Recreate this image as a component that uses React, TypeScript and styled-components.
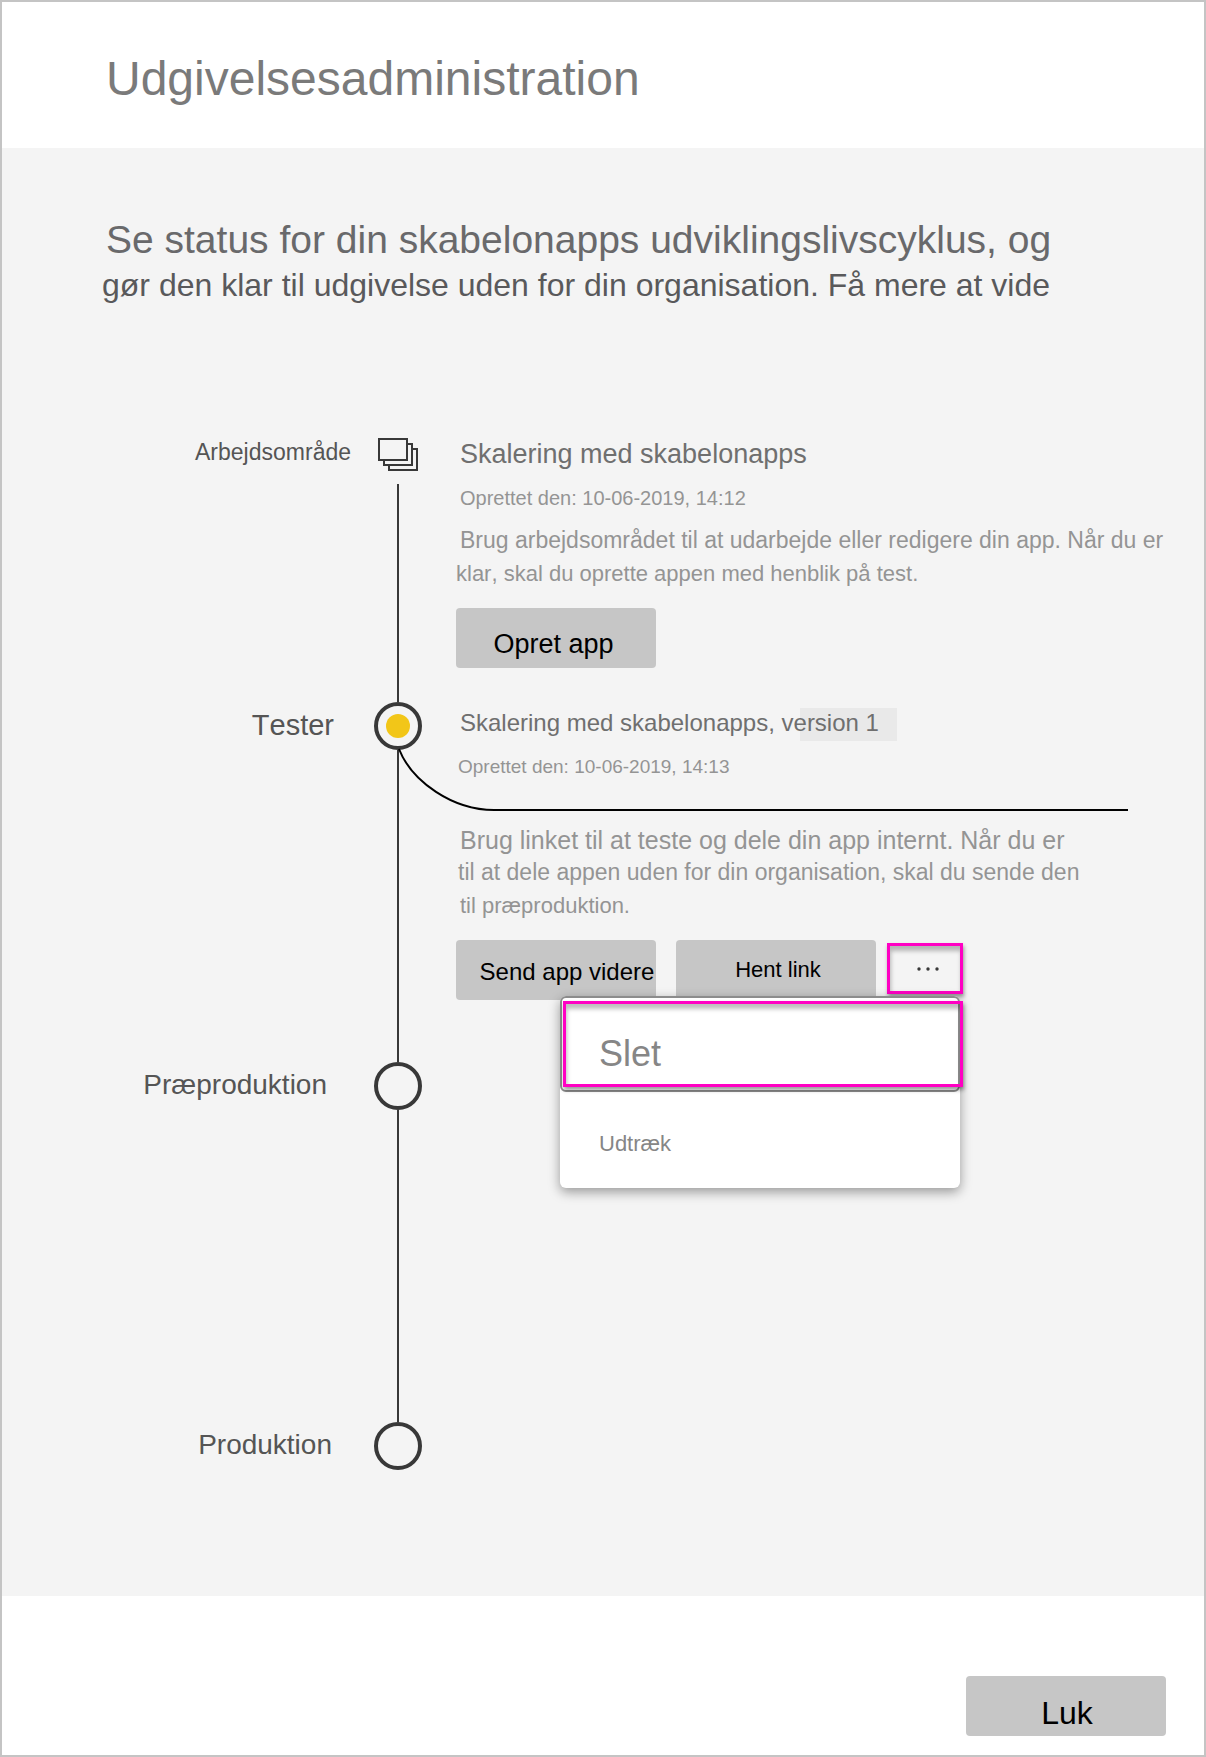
import React from 'react';
import styled, { createGlobalStyle, css } from 'styled-components';

const colors = {
  frame: '#c4c4c4',
  panel: '#f4f4f4',
  button: '#c6c6c6',
  ink: '#383838',
  accent: '#f2c618',
  callout: '#ff00c3',
  muted: '#949494',
};

const GlobalStyle = createGlobalStyle`
  *, *::before, *::after { box-sizing: border-box; }
  body {
    margin: 0;
    font-family: "Liberation Sans", Arial, sans-serif;
    font-kerning: none;
    background: #fff;
  }
  h1, h2, p, ol { margin: 0; padding: 0; font-weight: 400; }
  button { font-family: inherit; font-kerning: inherit; }
`;

const Dialog = styled.div`
  display: flex;
  flex-direction: column;
  min-height: 100vh;
  border: 2px solid ${colors.frame};
  background: #fff;
`;

const Header = styled.header`
  padding: 49px 104px 41px;
`;

const Title = styled.h1`
  font-size: 48px;
  line-height: 56px;
  color: #7a7a7a;
`;

const Main = styled.main`
  flex: 1;
  padding: 68px 0 126px;
  background: ${colors.panel};
`;

const Intro = styled.div`
  padding: 0 40px 0 100px;
  margin-bottom: 131px;
`;

const IntroLead = styled.p`
  padding-left: 4px;
  font-size: 39px;
  line-height: 48px;
  color: #69696b;
`;

const IntroText = styled.p`
  font-size: 32px;
  line-height: 43px;
  color: #59595b;
`;

const PlainLink = styled.a`
  color: inherit;
  text-decoration: none;
`;

const Timeline = styled.ol`
  list-style: none;
`;

const Stage = styled.li<{ $height: number }>`
  position: relative;
  display: grid;
  grid-template-columns: 372px 48px minmax(0, 1fr);
  min-height: ${(p) => p.$height}px;
`;

const StageLabel = styled.h2<{ $size: number; $inset: number; $top?: number }>`
  padding: ${(p) => p.$top ?? 5}px ${(p) => p.$inset}px 0 0;
  font-size: ${(p) => p.$size}px;
  line-height: ${(p) => (p.$size > 24 ? 36 : 28)}px;
  text-align: right;
  color: #555;
`;

const Rail = styled.div`
  display: flex;
  flex-direction: column;
  align-items: center;
`;

const RailLine = styled.div<{ $gap?: number }>`
  flex: 1;
  width: 2px;
  margin-top: ${(p) => p.$gap ?? 0}px;
  background: ${colors.ink};
`;

const Node = styled.div<{ $active?: boolean }>`
  display: grid;
  place-items: center;
  width: 48px;
  height: 48px;
  border: 4px solid ${colors.ink};
  border-radius: 50%;

  ${(p) =>
    p.$active &&
    css`
      &::after {
        content: '';
        width: 24px;
        height: 24px;
        border-radius: 50%;
        background: ${colors.accent};
      }
    `}
`;

const Branch = styled.div`
  position: absolute;
  top: 46px;
  left: 396px;
  right: 76px;
  display: flex;
  align-items: flex-end;
  pointer-events: none;

  svg { display: block; flex: none; }
`;

const BranchLine = styled.div`
  flex: 1;
  height: 2px;
  background: #000;
`;

const Details = styled.div<{ $top?: number }>`
  padding: ${(p) => p.$top ?? 0}px 24px 0 34px;
`;

const StageName = styled.p<{ $size: number }>`
  padding-left: 4px;
  font-size: ${(p) => p.$size}px;
  line-height: 32px;
  color: #6f6f6f;
`;

const Highlight = styled.span`
  padding: 1px 18px 5px 0;
  background: linear-gradient(90deg, transparent 6px, #e9e9e9 6px);
`;

const Created = styled.p<{ $size: number; $indent: number }>`
  margin-top: 16px;
  padding-left: ${(p) => p.$indent}px;
  font-size: ${(p) => p.$size}px;
  line-height: 24px;
  color: ${colors.muted};
`;

const Description = styled.div<{ $gap: number }>`
  margin: ${(p) => p.$gap}px 0 17px;
  color: ${colors.muted};
`;

const Line = styled.p<{ $size: number; $indent?: number }>`
  padding-left: ${(p) => p.$indent ?? 0}px;
  font-size: ${(p) => p.$size}px;
  line-height: ${(p) => (p.$size > 24 ? 30 : 34)}px;
  white-space: nowrap;
`;

const Actions = styled.div`
  position: relative;
  display: flex;
  align-items: flex-start;
  gap: 11px;
`;

const ButtonPair = styled.div`
  display: flex;
  gap: 20px;
`;

const Button = styled.button<{ $size: number; $pad?: string }>`
  width: 200px;
  height: 60px;
  padding: ${(p) => p.$pad ?? '0'};
  border: 0;
  border-radius: 4px;
  background: ${colors.button};
  color: #000;
  font-size: ${(p) => p.$size}px;
  white-space: nowrap;
`;

const calloutBox = css`
  border: 3px solid ${colors.callout};
  box-shadow: 1px 3px 4px rgba(0, 0, 0, 0.4), inset 1px 5px 4px rgba(0, 0, 0, 0.26);
`;

const MoreButton = styled.button`
  display: grid;
  place-items: center;
  width: 76px;
  height: 51px;
  margin-top: 3px;
  padding: 0 0 0 6px;
  background: transparent;
  ${calloutBox}
`;

const Menu = styled.div`
  position: absolute;
  z-index: 1;
  top: 56px;
  left: 104px;
  width: 400px;
  border-radius: 6px;
  background: #fff;
  box-shadow: 0 4px 12px rgba(0, 0, 0, 0.38);
`;

const MenuItem = styled.button<{ $size: number; $focused?: boolean }>`
  position: relative;
  display: block;
  width: 100%;
  height: 96px;
  padding: ${(p) => (p.$focused ? 20 : 8)}px 37px 0;
  border: 2px solid ${(p) => (p.$focused ? '#8c8c8c' : 'transparent')};
  border-radius: 6px;
  background: transparent;
  color: #868686;
  font-size: ${(p) => p.$size}px;
  text-align: left;

  ${(p) =>
    p.$focused &&
    css`
      &::after {
        content: '';
        position: absolute;
        inset: 3px -5px 3px 1px;
        ${calloutBox}
      }
    `}
`;

const Footer = styled.footer`
  display: flex;
  justify-content: flex-end;
  padding: 80px 38px 19px;
`;

const StackIcon = () => (
  <svg width="40" height="33" viewBox="0 0 40 33" fill="none" stroke={colors.ink} strokeWidth="2" aria-hidden="true">
    <path d="M11 27v5h28V11h-5" />
    <path d="M6 22v5h28V6h-5" />
    <rect x="1" y="1" width="28" height="21" />
  </svg>
);

const BranchCurve = () => (
  <svg width="100" height="63" viewBox="0 0 100 63" fill="none" stroke="#000" strokeWidth="2" aria-hidden="true">
    <path d="M1 1C14 34 55 62 96 62H100" />
  </svg>
);

const Dots = () => (
  <svg width="22" height="4" viewBox="0 0 22 4" fill={colors.ink} aria-hidden="true">
    <circle cx="2" cy="2" r="1.7" />
    <circle cx="11" cy="2" r="1.7" />
    <circle cx="20" cy="2" r="1.7" />
  </svg>
);

export default function App() {
  return (
    <>
      <GlobalStyle />
      <Dialog>
        <Header>
          <Title>Udgivelsesadministration</Title>
        </Header>

        <Main>
          <Intro>
            <IntroLead>Se status for din skabelonapps udviklingslivscyklus, og</IntroLead>
            <IntroText>
              gør den klar til udgivelse uden for din organisation. <PlainLink href="#">Få mere at vide</PlainLink>
            </IntroText>
          </Intro>

          <Timeline>
            <Stage $height={264}>
              <StageLabel $size={23} $inset={23} $top={0}>Arbejdsområde</StageLabel>
              <Rail>
                <StackIcon />
                <RailLine $gap={13} />
              </Rail>
              <Details>
                <StageName $size={27}>Skalering med skabelonapps</StageName>
                <Created $size={20} $indent={4}>Oprettet den: 10-06-2019, 14:12</Created>
                <Description $gap={13}>
                  <Line $size={23} $indent={4}>
                    Brug arbejdsområdet til at udarbejde eller redigere din app. Når du er
                  </Line>
                  <Line $size={22}>klar, skal du oprette appen med henblik på test.</Line>
                </Description>
                <Button $size={27} $pad="12px 5px 0 0">Opret app</Button>
              </Details>
            </Stage>

            <Stage $height={360}>
              <StageLabel $size={29} $inset={40}>Tester</StageLabel>
              <Rail>
                <Node $active />
                <RailLine />
              </Rail>
              <Branch>
                <BranchCurve />
                <BranchLine />
              </Branch>
              <Details $top={5}>
                <StageName $size={24}>
                  Skalering med skabelonapps, v<Highlight>ersion 1</Highlight>
                </StageName>
                <Created $size={19} $indent={2}>Oprettet den: 10-06-2019, 14:13</Created>
                <Description $gap={46}>
                  <Line $size={25} $indent={4}>Brug linket til at teste og dele din app internt. Når du er</Line>
                  <Line $size={23} $indent={2}>til at dele appen uden for din organisation, skal du sende den</Line>
                  <Line $size={22} $indent={4}>til præproduktion.</Line>
                </Description>
                <Actions>
                  <ButtonPair>
                    <Button $size={24} $pad="3px 0 0 22px">Send app videre</Button>
                    <Button $size={22} $pad="0 0 0 4px">Hent link</Button>
                  </ButtonPair>
                  <MoreButton aria-label="Flere handlinger" aria-haspopup="menu" aria-expanded="true">
                    <Dots />
                  </MoreButton>
                  <Menu role="menu">
                    <MenuItem role="menuitem" $size={36} $focused>Slet</MenuItem>
                    <MenuItem role="menuitem" $size={22}>Udtræk</MenuItem>
                  </Menu>
                </Actions>
              </Details>
            </Stage>

            <Stage $height={360}>
              <StageLabel $size={28} $inset={47}>Præproduktion</StageLabel>
              <Rail>
                <Node />
                <RailLine />
              </Rail>
            </Stage>

            <Stage $height={48}>
              <StageLabel $size={28} $inset={42}>Produktion</StageLabel>
              <Rail>
                <Node />
              </Rail>
            </Stage>
          </Timeline>
        </Main>

        <Footer>
          <Button $size={32} $pad="15px 0 0 2px">Luk</Button>
        </Footer>
      </Dialog>
    </>
  );
}
